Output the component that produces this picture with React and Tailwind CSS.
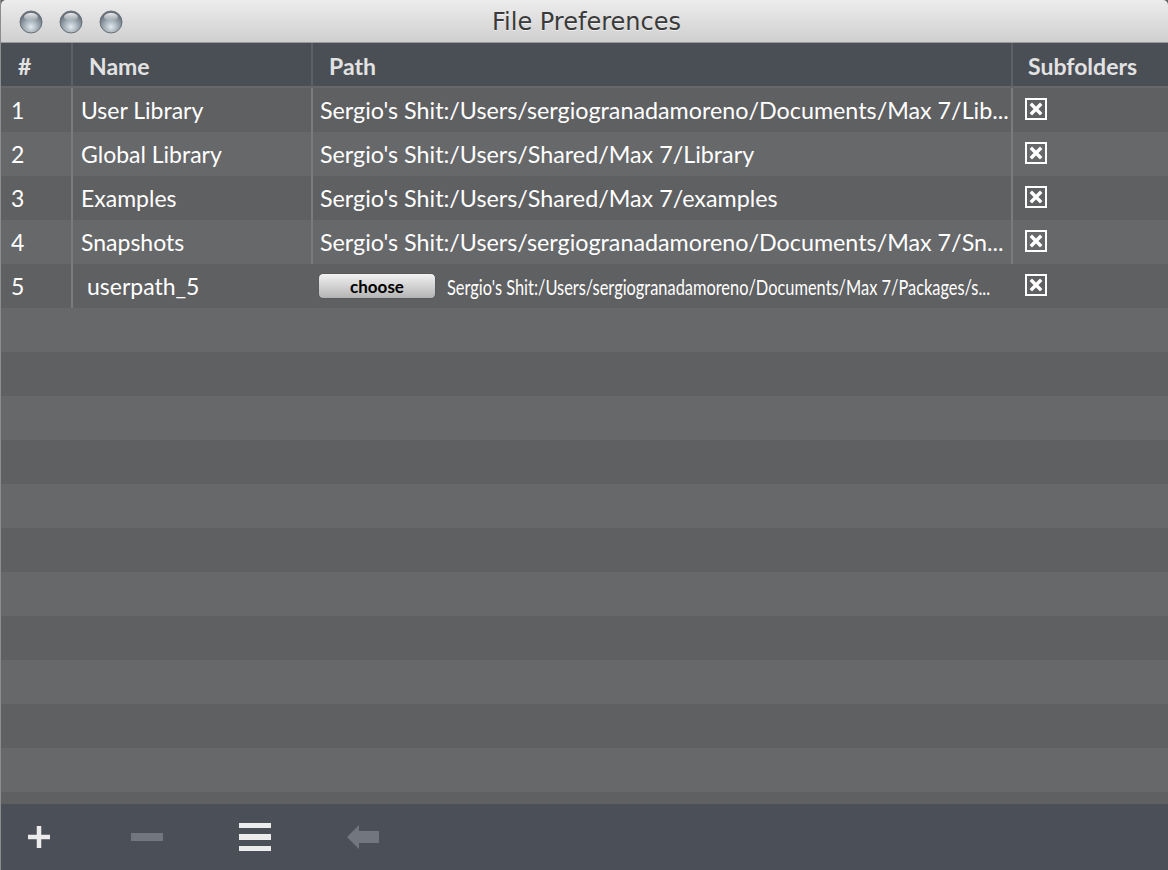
import React from 'react';

const rows = [
    { n: '1', name: 'User Library', path: "Sergio's Shit:/Users/sergiogranadamoreno/Documents/Max 7/Lib..." },
    { n: '2', name: 'Global Library', path: "Sergio's Shit:/Users/Shared/Max 7/Library" },
    { n: '3', name: 'Examples', path: "Sergio's Shit:/Users/Shared/Max 7/examples" },
    { n: '4', name: 'Snapshots', path: "Sergio's Shit:/Users/sergiogranadamoreno/Documents/Max 7/Sn..." },
];

const Check = () => (
    <svg width="22" height="22" viewBox="0 0 22 22">
        <rect x="1" y="1" width="20" height="20" fill="none" stroke="#fff" strokeWidth="2" />
        <path d="M7 7 L15 15 M15 7 L7 15" stroke="#fff" strokeWidth="3.4" strokeLinecap="square" />
    </svg>
);

const Light = () => (
    <svg width="24" height="24" viewBox="0 0 24 24">
        <defs>
            <radialGradient id="tl" cx="50%" cy="72%" r="60%">
                <stop offset="0%" stopColor="#e2e9ee" />
                <stop offset="60%" stopColor="#98a4ad" />
                <stop offset="100%" stopColor="#68737c" />
            </radialGradient>
            <linearGradient id="tlh" x1="0" y1="0" x2="0" y2="1">
                <stop offset="0%" stopColor="#ffffff" stopOpacity="0.9" />
                <stop offset="100%" stopColor="#ffffff" stopOpacity="0" />
            </linearGradient>
        </defs>
        <circle cx="12" cy="12" r="11" fill="url(#tl)" stroke="#6a7178" strokeWidth="1" />
        <ellipse cx="12" cy="7" rx="7" ry="4" fill="url(#tlh)" />
    </svg>
);

export default function App() {
    const stripes = Array.from({ length: 12 });
    return (
        <div className="w-[1168px] h-[870px] flex flex-col overflow-hidden bg-[#606163] border-l border-[#8c8d8f]" style={{ fontFamily: 'Lato, "Open Sans", sans-serif' }}>
            {/* title bar */}
            <div className="relative h-[43px] shrink-0 flex items-center justify-center bg-gradient-to-b from-[#ededed] to-[#cfcfcf] border-b border-[#9a9a9a] rounded-t-[5px]">
                <div className="absolute left-[18px] top-[10px] flex gap-[16px]">
                    <Light />
                    <Light />
                    <Light />
                </div>
                <span className="text-[24px] text-[#3a3a3a] pt-[2px] pl-[4px]" style={{ fontFamily: '"DejaVu Sans", sans-serif', textShadow: '0 1px 0 rgba(255,255,255,0.6)' }}>File Preferences</span>
            </div>

            {/* header */}
            <div className="h-[45px] shrink-0 flex bg-[#4a4e55] border-b-2 border-[#66676a] text-[23px] font-bold text-[#e2e2e2]">
                <div className="w-[72px] border-r-2 border-[#5d6065] pl-[17px] pt-[4px] flex items-center">#</div>
                <div className="w-[240px] border-r-2 border-[#5d6065] pl-[16px] pt-[4px] flex items-center">Name</div>
                <div className="w-[700px] border-r-2 border-[#5d6065] pl-[16px] pt-[4px] flex items-center">Path</div>
                <div className="flex-1 pl-[15px] pt-[4px] flex items-center">Subfolders</div>
            </div>

            {/* rows */}
            <div className="flex-1 overflow-hidden text-[23px] text-white">
                {rows.map((r, i) => (
                    <div key={r.n} className={`h-[44px] flex ${i % 2 === 0 ? 'bg-[#5f6062]' : 'bg-[#67686a]'}`}>
                        <div className="w-[72px] border-r-2 border-[#7a7b7e] pl-[10px] flex items-center">{r.n}</div>
                        <div className="w-[240px] border-r-2 border-[#7a7b7e] pl-[8px] flex items-center">{r.name}</div>
                        <div className="w-[700px] border-r-2 border-[#7a7b7e] pl-[7px] flex items-center min-w-0">
                            <span className="whitespace-nowrap text-[23.3px]">{r.path}</span>
                        </div>
                        <div className="flex-1 pl-[12px] pt-[10px]">
                            <Check />
                        </div>
                    </div>
                ))}
                <div className="h-[44px] flex bg-[#5f6062]">
                    <div className="w-[72px] border-r-2 border-[#7a7b7e] pl-[10px] flex items-center">5</div>
                    <div className="w-[240px] pl-[14px] flex items-center">userpath_5</div>
                    <div className="w-[700px] pl-[5px] flex items-center min-w-0">
                        <button className="w-[118px] h-[26px] shrink-0 rounded-[5px] border border-[#5a5a5a] bg-gradient-to-b from-[#f2f2f2] to-[#b4b4b4] text-[17px] font-bold text-black leading-none">
                            choose
                        </button>
                        <span className="ml-[11px] text-[22px] whitespace-nowrap inline-block origin-left scale-x-[0.745]">
                            Sergio's Shit:/Users/sergiogranadamoreno/Documents/Max 7/Packages/s...
                        </span>
                    </div>
                    <div className="flex-1 pl-[12px] pt-[10px]">
                        <Check />
                    </div>
                </div>
                {stripes.map((_, i) => (
                    <div key={i} className={`h-[44px] ${i % 2 === 0 ? 'bg-[#67686a]' : 'bg-[#5f6062]'}`} />
                ))}
            </div>

            {/* footer */}
            <div className="h-[66px] shrink-0 bg-[#4b4f57] flex items-center">
                <div className="w-[108px] pl-[26px] flex items-center">
                    <svg width="24" height="24" viewBox="0 0 24 24">
                        <path d="M12 1 V23 M1 12 H23" stroke="#ececec" strokeWidth="4.5" />
                    </svg>
                </div>
                <div className="w-[108px] pl-[22px] flex items-center">
                    <svg width="32" height="8" viewBox="0 0 32 8">
                        <rect x="0" y="0" width="32" height="8" fill="#72767e" />
                    </svg>
                </div>
                <div className="w-[108px] pl-[22px] flex items-center">
                    <svg width="32" height="28" viewBox="0 0 32 28">
                        <rect x="0" y="0" width="32" height="5" fill="#ececec" />
                        <rect x="0" y="11" width="32" height="6" fill="#ececec" />
                        <rect x="0" y="23" width="32" height="5" fill="#ececec" />
                    </svg>
                </div>
                <div className="pl-[22px] flex items-center">
                    <svg width="32" height="26" viewBox="0 0 32 26">
                        <path d="M0 13 L12 1 V7 H32 V19 H12 V25 Z" fill="#72767e" />
                    </svg>
                </div>
            </div>
        </div>
    );
}
